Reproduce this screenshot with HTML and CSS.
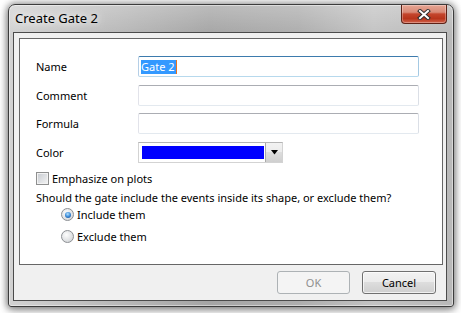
FILE: index.html
```html
<!DOCTYPE html>
<html lang="en">
<head>
  <meta charset="UTF-8">
  <title>Create Gate 2</title>
  <link rel="stylesheet" href="styles.css">
</head>
<body>
  <div class="window">
    <div class="titlebar">
      <span class="title">Create Gate 2</span>
      <button class="close">
        <svg width="14" height="11" viewBox="0 0 14 11">
          <path d="M3 2 L11 9 M11 2 L3 9" stroke="#2e2e2e" stroke-width="4" stroke-linecap="square"/>
          <path d="M3 2 L11 9 M11 2 L3 9" stroke="#fff" stroke-width="2" stroke-linecap="square"/>
        </svg>
      </button>
    </div>
    <div class="client">
      <div class="panel">
        <div class="fields">
          <label>Name</label>
          <div class="input focus"><span class="sel">Gate 2</span><span class="caret"></span></div>
          <label>Comment</label>
          <div class="input"></div>
          <label>Formula</label>
          <div class="input"></div>
          <label>Color</label>
          <div class="combo">
            <span class="swatch"></span>
            <span class="drop">
              <svg width="7" height="5" viewBox="0 0 7 5"><path d="M0 0 H7 L3.5 4.5 Z" fill="#000"/></svg>
            </span>
          </div>
        </div>
        <div class="check"><span class="box"></span>Emphasize on plots</div>
        <p class="question">Should the gate include the events inside its shape, or exclude them?</p>
        <div class="radio first"><span class="dot checked"></span>Include them</div>
        <div class="radio"><span class="dot"></span>Exclude them</div>
      </div>
      <div class="footer">
        <button class="btn" disabled>OK</button>
        <button class="btn cancel">Cancel</button>
      </div>
    </div>
  </div>
</body>
</html>
```

FILE: styles.css
```css
body {
  margin: 0;
  width: 461px;
  height: 313px;
  overflow: hidden;
  background: #fff;
  font-family: "Noto Sans", "Open Sans", sans-serif;
  font-size: 11px;
  color: #000;
}
.window {
  width: 446px;
  height: 303px;
  margin: 4px 0 0 8px;
  box-sizing: border-box;
  border: 1px solid #3c3c3c;
  border-radius: 7px 7px 3px 3px;
  padding: 0 6px 5px 4px;
  display: flex;
  flex-direction: column;
  background:
    linear-gradient(to bottom, rgba(255,255,255,0.25), rgba(255,255,255,0) 30px),
    linear-gradient(to right, #d2d2d2 0%, #bdbdbd 20%, #a5a5a5 45%, #adadad 65%, #c3c3c3 82%, #b9b9b9 100%);
  box-shadow: inset 0 0 0 1px rgba(255,255,255,0.45), 0 0 7px 1px rgba(0,0,0,0.4), 0 3px 10px rgba(0,0,0,0.3);
}
.titlebar {
  height: 27px;
  display: flex;
  align-items: flex-start;
}
.title {
  margin: 5px 0 0 2px;
  font-size: 13px;
  line-height: 17px;
  text-shadow: 0 0 6px #fff, 0 0 12px rgba(255,255,255,0.9);
}
.close {
  margin-left: auto;
  width: 46px;
  height: 19px;
  padding: 0;
  border: 1px solid #5e2116;
  border-top: none;
  border-radius: 0 0 4px 4px;
  display: flex;
  align-items: center;
  justify-content: center;
  background: linear-gradient(#e6a593, #d98a77 40%, #c4452c 50%, #b8351c 75%, #d1614a);
  box-shadow: inset 0 0 0 1px rgba(255,255,255,0.3);
}
.client {
  flex: 1;
  border: 1px solid #4b4b4b;
  background: #f0f0f0;
  display: flex;
  flex-direction: column;
}
.panel {
  height: 227px;
  box-sizing: border-box;
  margin: 5px 3px 0 5px;
  border: 1px solid #666;
  background: #fff;
  padding: 17px 0 0 16px;
}
.fields {
  display: grid;
  grid-template-columns: 102px 281px;
  grid-auto-rows: 21px;
  row-gap: 7.7px;
  align-items: center;
}
.input {
  height: 21px;
  box-sizing: border-box;
  border: 1px solid;
  border-color: #abadb3 #dbdfe6 #e3e9ef #e2e3ea;
  border-radius: 2px;
}
.input.focus {
  border-color: #3d7bad #a4c9e3 #b7d9ed #b5cfe7;
  display: flex;
  align-items: center;
  padding-left: 2px;
}
.sel {
  background: #3399ff;
  color: #fff;
  line-height: 14px;
  padding: 0 1px 0 0;
}
.caret {
  width: 1px;
  height: 14px;
  background: #e8731e;
}
.combo {
  width: 145px;
  height: 21px;
  box-sizing: border-box;
  border: 1px solid #d3d3d3;
  border-top-color: #b5b5b5;
  display: flex;
}
.swatch {
  width: 122px;
  height: 13px;
  margin: 3px 1px 0 3px;
  background: #0000ff;
}
.drop {
  flex: 1;
  border-left: 1px solid #a9a9a9;
  display: flex;
  align-items: center;
  justify-content: center;
  background: linear-gradient(#f2f2f2, #ebebeb 50%, #dddddd 50%, #cfcfcf);
}
.check {
  display: flex;
  align-items: center;
  gap: 3px;
  height: 16px;
  margin-top: 7.5px;
}
.box {
  width: 13px;
  height: 13px;
  box-sizing: border-box;
  border: 1px solid #8e8f8f;
  background: linear-gradient(135deg, #c6cad0, #f4f4f4);
  box-shadow: inset 0 0 0 1px #f2f2f2;
}
.question {
  margin: 3.4px 0 0;
  line-height: 16px;
}
.radio {
  display: flex;
  align-items: center;
  gap: 3px;
  height: 16px;
  padding-left: 25px;
  margin-top: 6px;
}
.radio.first {
  margin-top: 1px;
}
.dot {
  width: 13px;
  height: 13px;
  box-sizing: border-box;
  border: 1px solid #8c8f93;
  border-radius: 50%;
  background: radial-gradient(circle at 40% 35%, #fdfdfd, #dfe1e3 60%, #c9ccd0);
  display: flex;
  align-items: center;
  justify-content: center;
}
.dot.checked::after {
  content: "";
  width: 6px;
  height: 6px;
  border-radius: 50%;
  background: radial-gradient(circle at 45% 35%, #b4e2ff, #3d8cd8 50%, #0f3f85);
}
.footer {
  flex: 1;
  display: flex;
  justify-content: flex-end;
  align-items: flex-start;
  gap: 12px;
  padding: 6px 10px 0 0;
}
.btn {
  width: 73px;
  height: 23px;
  padding: 0;
  font: inherit;
  color: #000;
  border: 1px solid #707070;
  border-radius: 3px;
  background: linear-gradient(#f2f2f2, #ebebeb 50%, #dddddd 50%, #cfcfcf);
  box-shadow: inset 0 0 0 1px rgba(255,255,255,0.7);
}
.btn:disabled {
  border-color: #adb2b5;
  background: #f4f4f4;
  color: #8f8f8f;
  box-shadow: none;
}
.btn.cancel {
  width: 74px;
}
```
